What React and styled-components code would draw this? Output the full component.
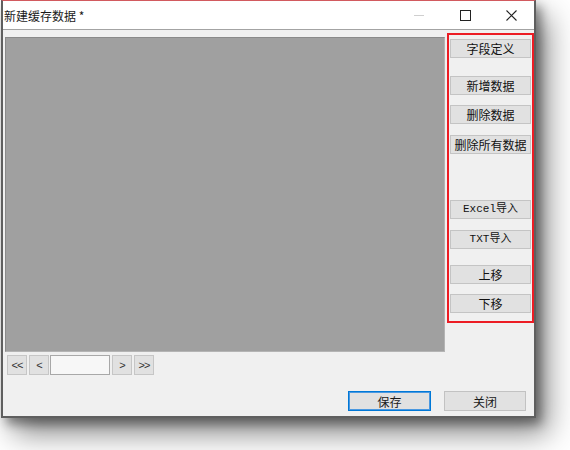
import styled, { createGlobalStyle } from "styled-components";

const GlobalStyle = createGlobalStyle`
  html, body {
    margin: 0;
    background: #ffffff;
  }
  body {
    min-height: 450px;
    font-family: "Noto Sans CJK SC", "Noto Sans", sans-serif;
  }
`;

const Window = styled.div`
  margin-left: 1px;
  width: 535px;
  height: 418px;
  box-sizing: border-box;
  border: solid #5f5f5f;
  border-width: 1px 2px 2px 2px;
  border-top-color: #d25a5f;
  background: #f0f0f0;
  display: flex;
  flex-direction: column;
  box-shadow: 5px 6px 10px rgba(0, 0, 0, 0.4),
    12px 16px 28px rgba(0, 0, 0, 0.45);
`;

const TitleBar = styled.div`
  height: 28px;
  background: #ffffff;
  display: flex;
  align-items: center;
  border-bottom: 1px solid #a3a3a3;
`;

const Title = styled.div`
  flex: 1;
  padding-left: 1px;
  font-size: 12px;
  color: #1a1a1a;
`;

const CaptionButton = styled.div`
  width: 46px;
  height: 28px;
  display: flex;
  align-items: center;
  justify-content: center;
`;

const Client = styled.div`
  flex: 1;
  display: flex;
  flex-direction: column;
`;

const TopRow = styled.div`
  display: flex;
  align-items: flex-start;
`;

const Grid = styled.div`
  margin: 7px 0 0 2px;
  width: 440px;
  height: 315px;
  box-sizing: border-box;
  background: #a0a0a0;
  border: 1px solid #8a8a8a;
  border-right-color: #b4b4b4;
  border-bottom-color: #b4b4b4;
`;

const SidePanel = styled.div`
  margin: 3px 0 0 2px;
  width: 87px;
  height: 290px;
  box-sizing: border-box;
  border: 2px solid #ec1c24;
  padding: 0 1px;
  display: flex;
  flex-direction: column;
`;

const SideButton = styled.button`
  margin-top: ${(p) => p.$top}px;
  height: 19px;
  width: 100%;
  box-sizing: border-box;
  padding: 0;
  background: #e1e1e1;
  border: 1px solid #c4c4c4;
  font-family: ${(p) =>
    p.$latin
      ? `"Liberation Mono", "Noto Sans CJK SC", monospace`
      : `"Noto Sans CJK SC", sans-serif`};
  font-size: ${(p) => (p.$latin ? 11 : 12)}px;
  color: #111;
  line-height: 17px;
`;

const NavRow = styled.div`
  margin: 3px 0 0 4px;
  display: flex;
  align-items: center;
`;

const NavButton = styled.button`
  width: 20px;
  height: 20px;
  margin-right: ${(p) => p.$gap}px;
  box-sizing: border-box;
  padding: 0;
  background: #e1e1e1;
  border: 1px solid #c6c6c6;
  font-family: "Liberation Sans", sans-serif;
  font-size: 11px;
  color: #333;
  letter-spacing: -1px;
  line-height: 17px;
`;

const PageBox = styled.div`
  width: 60px;
  height: 20px;
  margin-right: 2px;
  box-sizing: border-box;
  background: #f7f7f7;
  border: 1px solid #a8a8a8;
`;

const Footer = styled.div`
  margin-top: 16px;
  padding-right: 8px;
  display: flex;
  justify-content: flex-end;
  gap: 13px;
`;

const DialogButton = styled.button`
  width: ${(p) => p.$w}px;
  height: 20px;
  box-sizing: border-box;
  padding: 0;
  background: #e1e1e1;
  border: 1px solid ${(p) => (p.$primary ? "#0078d7" : "#c2c2c2")};
  box-shadow: ${(p) => (p.$primary ? "inset 0 0 0 1px #4a98e0" : "none")};
  font-family: "Noto Sans CJK SC", sans-serif;
  font-size: 12px;
  color: #1a1a1a;
  line-height: 17px;
`;

const sideButtons = [
  { label: "字段定义", top: 4 },
  { label: "新增数据", top: 18 },
  { label: "删除数据", top: 10 },
  { label: "删除所有数据", top: 11 },
  { label: "Excel导入", top: 46, latin: true },
  { label: "TXT导入", top: 11, latin: true },
  { label: "上移", top: 16 },
  { label: "下移", top: 10 },
];

export default function App() {
  return (
    <>
      <GlobalStyle />
      <Window>
        <TitleBar>
          <Title>新建缓存数据 *</Title>
          <CaptionButton>
            <svg width="10" height="10" viewBox="0 0 10 10">
              <path d="M0 5.5h10" stroke="#cfcfcf" strokeWidth="1" />
            </svg>
          </CaptionButton>
          <CaptionButton>
            <svg width="11" height="11" viewBox="0 0 11 11">
              <rect x="0.5" y="0.5" width="10" height="10" fill="none" stroke="#222" strokeWidth="1" />
            </svg>
          </CaptionButton>
          <CaptionButton>
            <svg width="11" height="11" viewBox="0 0 11 11">
              <path d="M0.5 0.5l10 10M10.5 0.5l-10 10" stroke="#222" strokeWidth="1.1" />
            </svg>
          </CaptionButton>
        </TitleBar>
        <Client>
          <TopRow>
            <Grid />
            <SidePanel>
              {sideButtons.map((b) => (
                <SideButton key={b.label} $top={b.top} $latin={b.latin}>
                  {b.label}
                </SideButton>
              ))}
            </SidePanel>
          </TopRow>
          <NavRow>
            <NavButton $gap={2}>&lt;&lt;</NavButton>
            <NavButton $gap={1}>&lt;</NavButton>
            <PageBox />
            <NavButton $gap={2}>&gt;</NavButton>
            <NavButton $gap={0}>&gt;&gt;</NavButton>
          </NavRow>
          <Footer>
            <DialogButton $w={83} $primary>保存</DialogButton>
            <DialogButton $w={82}>关闭</DialogButton>
          </Footer>
        </Client>
      </Window>
    </>
  );
}
